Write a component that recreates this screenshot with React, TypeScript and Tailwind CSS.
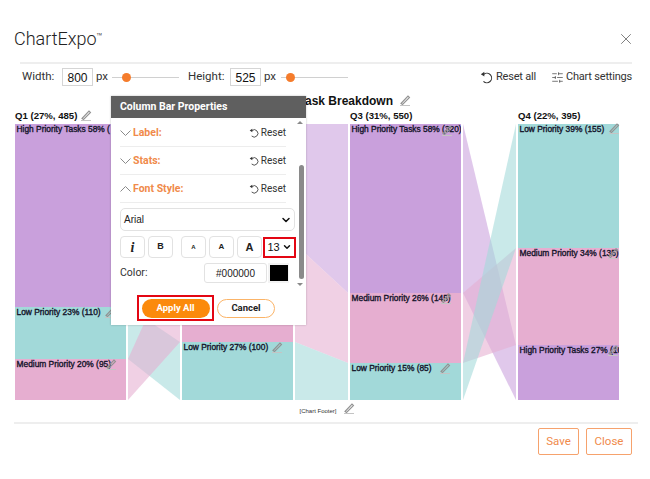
import { ChevronDown, SlidersHorizontal, X } from 'lucide-react'

const PURPLE = '#c9a0dc'
const TEAL = '#a2d9d9'
const PINK = '#e6aed0'

const columns = [
  {
    title: 'Q1 (27%, 485)',
    x: 15,
    width: 111,
    segments: [
      { y1: 124, y2: 307, color: PURPLE, label: 'High Priority Tasks 58% (' },
      { y1: 307, y2: 359, color: TEAL, label: 'Low Priority 23% (110)' },
      { y1: 359, y2: 400, color: PINK, label: 'Medium Priority 20% (95)' },
    ],
  },
  {
    // title of this column sits behind the popup
    title: '',
    x: 182,
    width: 111,
    segments: [
      { y1: 124, y2: 244, color: PURPLE, label: '' },
      { y1: 244, y2: 342, color: PINK, label: '' },
      { y1: 342, y2: 400, color: TEAL, label: 'Low Priority 27% (100)' },
    ],
  },
  {
    title: 'Q3 (31%, 550)',
    x: 350,
    width: 111,
    segments: [
      { y1: 124, y2: 293, color: PURPLE, label: 'High Priority Tasks 58% (320)' },
      { y1: 293, y2: 363, color: PINK, label: 'Medium Priority 26% (145)' },
      { y1: 363, y2: 400, color: TEAL, label: 'Low Priority 15% (85)' },
    ],
  },
  {
    title: 'Q4 (22%, 395)',
    x: 518,
    width: 101,
    segments: [
      { y1: 124, y2: 248, color: TEAL, label: 'Low Priority 39% (155)' },
      { y1: 248, y2: 345, color: PINK, label: 'Medium Priority 34% (135)' },
      { y1: 345, y2: 400, color: PURPLE, label: 'High Priority Tasks 27% (105)' },
    ],
  },
]

const flows = [
  { x1: 128, x2: 180, a: [124, 307], b: [124, 244], color: PURPLE },
  { x1: 128, x2: 180, a: [307, 359], b: [342, 400], color: TEAL },
  { x1: 128, x2: 180, a: [359, 400], b: [244, 342], color: PINK },
  { x1: 295, x2: 348, a: [124, 244], b: [124, 293], color: PURPLE },
  { x1: 295, x2: 348, a: [244, 342], b: [293, 363], color: PINK },
  { x1: 295, x2: 348, a: [342, 400], b: [363, 400], color: TEAL },
  { x1: 463, x2: 516, a: [124, 293], b: [345, 400], color: PURPLE },
  { x1: 463, x2: 516, a: [293, 363], b: [248, 345], color: PINK },
  { x1: 463, x2: 516, a: [363, 400], b: [124, 248], color: TEAL },
]

const pencils = [
  [81, 110],
  [400, 95],
  [609, 123],
  [105, 307],
  [106, 359],
  [272, 342],
  [440, 363],
  [441, 293],
  [442, 125],
  [608, 248],
  [608, 345],
  [344, 403],
]

const Pencil = ({ x, y }: { x: number; y: number }) => (
  <g transform={`translate(${x} ${y})`} fill="none">
    <path d="M1 8.5 L8 1 L9.5 2.5 L2.5 9.5 Z" stroke="#929292" strokeWidth="1.1" />
    <path d="M0 10.5 H10" stroke="#c4c4c4" strokeWidth="1" />
  </g>
)

const ResetIcon = ({ size }: { size: number }) => (
  <svg width={size} height={size} viewBox="0 0 12 12" fill="none" className="shrink-0">
    <path d="M3.6 3 A4.4 4.4 0 1 1 3.2 9.6" stroke="#333" strokeWidth="1" />
    <path d="M0.8 3 L4 0.8 L4 5 Z" fill="#333" />
  </svg>
)

const Chart = () => (
  <svg width="650" height="332" viewBox="0 90 650 332" className="block shrink-0" style={{ fontFamily: '"Liberation Sans", Arial, sans-serif' }}>
    <defs>
      {columns.map((col) => (
        <clipPath key={col.x} id={`col-${col.x}`}>
          <rect x={col.x} y={120} width={col.width} height={285} />
        </clipPath>
      ))}
    </defs>
    {flows.map((f, i) => (
      <polygon
        key={i}
        points={`${f.x1},${f.a[0]} ${f.x2},${f.b[0]} ${f.x2},${f.b[1]} ${f.x1},${f.a[1]}`}
        fill={f.color}
        fillOpacity="0.58"
      />
    ))}
    {columns.map((col) => (
      <g key={col.x}>
        {col.title && (
          <text x={col.x} y={119} fontSize="9.6" fontWeight="700" fill="#111">
            {col.title}
          </text>
        )}
        {col.segments.map((s) => (
          <rect key={s.y1} x={col.x} y={s.y1} width={col.width} height={s.y2 - s.y1} fill={s.color} />
        ))}
      </g>
    ))}
    {columns.map((col) => (
      <g key={col.x} clipPath={`url(#col-${col.x})`}>
        {col.segments.map(
          (s) =>
            s.label && (
              <text key={s.label} x={col.x + 1.5} y={s.y1 + 7.5} fontSize="8.4" stroke="#14142a" strokeWidth="0.35" fill="#14142a">
                {s.label}
              </text>
            ),
        )}
      </g>
    ))}
    {pencils.map(([x, y]) => (
      <Pencil key={`${x}-${y}`} x={x} y={y} />
    ))}
    <text x="393" y="105" textAnchor="end" fontSize="12" fontWeight="700" fill="#111">
      Task Breakdown
    </text>
    <text x="318" y="413" textAnchor="middle" fontSize="6" fill="#333">
      [Chart Footer]
    </text>
  </svg>
)

const Slider = ({ thumb }: { thumb: number }) => (
  <div className="relative h-[1px] w-[67px] bg-[#d0d0d0]">
    <div className="absolute top-[-4px] h-[9px] w-[9px] rounded-full bg-[#f57c2c]" style={{ left: thumb }} />
  </div>
)

const SizeInput = ({ value }: { value: string }) => (
  <div className="flex h-[18px] w-[31px] items-center justify-center border border-[#d5d5d5] pt-[2px] font-['Liberation_Sans'] text-[12px] leading-none text-[#111]">
    {value}
  </div>
)

const SectionRow = ({ label, open }: { label: string; open?: boolean }) => (
  <div className="ml-[9px] flex h-[28px] items-center border-b border-[#ededed]">
    <svg width="13" height="8" viewBox="0 0 13 8" fill="none" className="shrink-0">
      <path d={open ? 'M0.5 6.5 L5.5 1.5 L10.5 6.5' : 'M0.5 1.5 L5.5 6.5 L10.5 1.5'} stroke="#8a8a8a" strokeWidth="1" />
    </svg>
    <span className="text-[10.5px] font-bold text-[#f08a4b]">{label}</span>
    <span className="ml-auto flex items-center gap-[2px] text-[10px] text-[#333]">
      <ResetIcon size={10} />
      Reset
    </span>
  </div>
)

const StyleButton = ({ children, className }: { children: React.ReactNode; className?: string }) => (
  <div className={`flex h-[22px] w-[25px] items-center justify-center rounded-[4px] border border-[#e2e2e2] font-bold text-[#222] ${className ?? ''}`}>
    {children}
  </div>
)

const PropertiesPopup = () => (
  <div className="absolute left-[111px] top-[96px] h-[229px] w-[195px] bg-white font-['Roboto'] shadow-[0_0_2px_rgba(0,0,0,0.25)]">
    <div className="flex h-[22px] items-center bg-[#5f5f5f] pl-[9px] text-[10.5px] font-bold text-white">Column Bar Properties</div>
    <div className="absolute right-[3px] top-[25px] h-0 w-0 border-x-[3px] border-b-[3px] border-x-transparent border-b-[#8a8a8a]" />
    <div className="absolute right-[2px] top-[69px] h-[114px] w-[5px] rounded-full bg-[#8a8a8a]" />
    <div className="absolute right-[3px] top-[187px] h-0 w-0 border-x-[3px] border-t-[3px] border-x-transparent border-t-[#8a8a8a]" />
    <div className="mt-[1px] w-[175px]">
      <SectionRow label="Label:" />
      <SectionRow label="Stats:" />
      <SectionRow label="Font Style:" open />
    </div>
    <div className="ml-[9px] mt-[5px] flex h-[23px] w-[175px] items-center justify-between rounded-[5px] border border-[#e2e2e2] pl-[3px] pr-[2px] font-['Liberation_Sans'] text-[10px] text-[#222]">
      Arial
      <ChevronDown size={12} strokeWidth={3} className="text-[#111]" />
    </div>
    <div className="ml-[9px] mt-[5px] flex items-center font-['Liberation_Sans']">
      <StyleButton className="font-['Liberation_Serif'] text-[14px] italic">i</StyleButton>
      <StyleButton className="ml-[3px] text-[9px]">B</StyleButton>
      <StyleButton className="ml-[8px] text-[6px]">A</StyleButton>
      <StyleButton className="ml-[3px] text-[8px]">A</StyleButton>
      <StyleButton className="ml-[3px] text-[11px]">A</StyleButton>
      <div className="ml-[1px] flex h-[21px] w-[33px] items-center justify-center gap-[2px] border-2 border-[#e30613] text-[11px] text-[#111]">
        13
        <ChevronDown size={10} strokeWidth={3.5} />
      </div>
    </div>
    <div className="mt-[5px] flex items-center pl-[9px] text-[10.5px] text-[#333]">
      <span className="w-[84px]">Color:</span>
      <div className="flex h-[20px] w-[63px] items-center justify-center rounded-[3px] border border-[#e2e2e2] font-['Liberation_Sans'] text-[10px] text-[#222]">
        #000000
      </div>
      <div className="ml-[1px] flex h-[20px] w-[21px] items-center justify-center bg-[#f3f3f3]">
        <div className="h-[16px] w-[18px] bg-black" />
      </div>
    </div>
    <div className="mt-[12px] flex items-center pl-[26px]">
      <div className="flex h-[26px] w-[77px] items-center justify-center border-2 border-[#e30613]">
        <div className="flex h-[19px] w-[68px] items-center justify-center rounded-full bg-[#fb8a0c] text-[9.5px] font-bold text-white">Apply All</div>
      </div>
      <div className="ml-[3px] flex h-[19px] w-[58px] items-center justify-center rounded-full border border-[#fbb468] text-[9.5px] font-bold text-[#222]">Cancel</div>
    </div>
  </div>
)

export default function App() {
  return (
    <div className="relative flex h-[479px] w-[650px] flex-col overflow-hidden bg-white font-['Roboto'] text-[#333]">
      <div className="flex h-[62px] shrink-0 items-end justify-between px-[14px] pb-[10px]">
        <div className="text-[18px] font-light leading-[26px] text-[#222]">
          ChartExpo<sup className="text-[10px]">™</sup>
        </div>
        <X size={18} strokeWidth={1} className="mb-[4px] mr-[1px] text-[#555]" />
      </div>
      <div className="mx-[20px] h-[2px] w-[612px] shrink-0 bg-[#eeeeee]" />
      <div className="flex h-[26px] shrink-0 items-center pl-[22px] pr-[18px] text-[11.5px]">
        <span className="w-[40px]">Width:</span>
        <SizeInput value="800" />
        <span className="ml-[3px] w-[16px]">px</span>
        <Slider thumb={9.5} />
        <span className="ml-[9px] w-[42px]">Height:</span>
        <SizeInput value="525" />
        <span className="ml-[3px] w-[17px]">px</span>
        <Slider thumb={4.5} />
        <span className="ml-auto flex items-center gap-[3px] text-[11px] tracking-[-0.2px]">
          <ResetIcon size={13} />
          Reset all
        </span>
        <span className="ml-[15px] flex items-center gap-[2px] text-[11px] tracking-[-0.2px]">
          <SlidersHorizontal size={13} strokeWidth={1.2} />
          Chart settings
        </span>
      </div>
      <Chart />
      <PropertiesPopup />
      <div className="mx-[14px] h-[2px] w-[624px] shrink-0 bg-[#eeeeee]" />
      <div className="flex justify-end gap-[7px] pr-[18px] pt-[4px]">
        <div className="flex h-[27px] w-[41px] items-center justify-center rounded-[2px] border border-[#f6a26d] text-[11.5px] text-[#f08a4b]">Save</div>
        <div className="flex h-[27px] w-[46px] items-center justify-center rounded-[2px] border border-[#f6a26d] text-[11.5px] text-[#f08a4b]">Close</div>
      </div>
    </div>
  )
}
